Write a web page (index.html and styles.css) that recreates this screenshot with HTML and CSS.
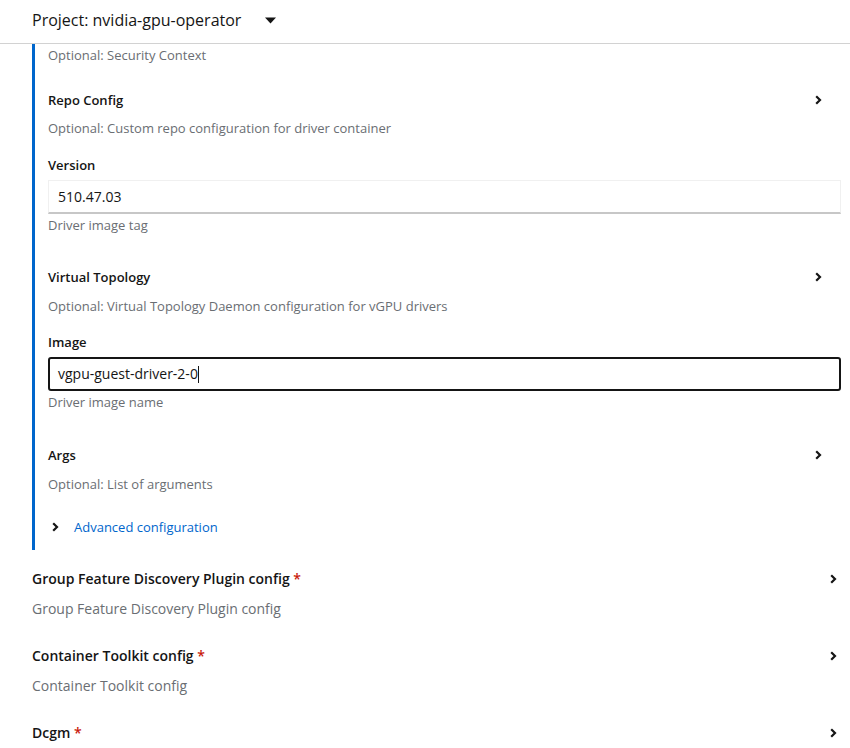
FILE: index.html
```html
<!DOCTYPE html>
<html>
<head>
<meta charset="utf-8">
<link rel="stylesheet" href="styles.css">
</head>
<body>
<header class="topbar">
  <span class="project">Project: nvidia-gpu-operator</span>
  <svg class="caret" width="11" height="7" viewBox="0 0 11 7"><path d="M0 0.5h11L5.5 6.5z" fill="#151515"/></svg>
</header>
<main class="content">
  <section class="panel">
    <p class="help first">Optional: Security Context</p>

    <div class="row inner-row r-repo">
      <span class="label">Repo Config</span>
      <svg class="chev" width="7" height="10" viewBox="0 0 7 10"><path d="M1.2 1.2L5 5 1.2 8.8" fill="none" stroke="#151515" stroke-width="2.2"/></svg>
    </div>
    <p class="help h-after-title">Optional: Custom repo configuration for driver container</p>

    <div class="label field-label">Version</div>
    <div class="input">510.47.03</div>
    <p class="help h-after-input">Driver image tag</p>

    <div class="row inner-row r-vt">
      <span class="label">Virtual Topology</span>
      <svg class="chev" width="7" height="10" viewBox="0 0 7 10"><path d="M1.2 1.2L5 5 1.2 8.8" fill="none" stroke="#151515" stroke-width="2.2"/></svg>
    </div>
    <p class="help h-after-title vt-help">Optional: Virtual Topology Daemon configuration for vGPU drivers</p>

    <div class="label field-label">Image</div>
    <div class="input focused">vgpu-guest-driver-2-0<span class="cursor"></span></div>
    <p class="help h-after-input">Driver image name</p>

    <div class="row inner-row r-args">
      <span class="label">Args</span>
      <svg class="chev" width="7" height="10" viewBox="0 0 7 10"><path d="M1.2 1.2L5 5 1.2 8.8" fill="none" stroke="#151515" stroke-width="2.2"/></svg>
    </div>
    <p class="help h-after-title args-help">Optional: List of arguments</p>

    <div class="advanced">
      <svg class="adv-chev" width="7" height="10" viewBox="0 0 7 10"><path d="M1.2 1.2L5 5 1.2 8.8" fill="none" stroke="#151515" stroke-width="2.2"/></svg>
      <span class="link">Advanced configuration</span>
    </div>
  </section>

  <div class="row outer-row o-first">
    <span class="olabel">Group Feature Discovery Plugin config <span class="req">*</span></span>
    <svg class="chev" width="7" height="10" viewBox="0 0 7 10"><path d="M1.2 1.2L5 5 1.2 8.8" fill="none" stroke="#151515" stroke-width="2.2"/></svg>
  </div>
  <p class="ohelp">Group Feature Discovery Plugin config</p>

  <div class="row outer-row">
    <span class="olabel">Container Toolkit config <span class="req">*</span></span>
    <svg class="chev" width="7" height="10" viewBox="0 0 7 10"><path d="M1.2 1.2L5 5 1.2 8.8" fill="none" stroke="#151515" stroke-width="2.2"/></svg>
  </div>
  <p class="ohelp">Container Toolkit config</p>

  <div class="row outer-row">
    <span class="olabel">Dcgm <span class="req">*</span></span>
    <svg class="chev" width="7" height="10" viewBox="0 0 7 10"><path d="M1.2 1.2L5 5 1.2 8.8" fill="none" stroke="#151515" stroke-width="2.2"/></svg>
  </div>
</main>
</body>
</html>
```

FILE: styles.css
```css
* { box-sizing: border-box; }
html, body {
  margin: 0;
  padding: 0;
  background: #fff;
  font-family: "Open Sans", "Noto Sans", sans-serif;
  color: #151515;
  overflow: hidden;
}
p { margin: 0; }

.topbar {
  height: 44px;
  border-bottom: 1px solid #d2d2d2;
  display: flex;
  align-items: center;
  padding-left: 32px;
  padding-bottom: 3px;
}
.project {
  font-size: 16px;
  line-height: 22px;
  color: #151515;
  width: 233px;
}
.caret { display: block; margin-top: 1px; }

.content {
  padding-left: 32px;
}
.panel {
  border-left: 3px solid #0066cc;
  padding-left: 13px;
  padding-right: 9px;
  padding-bottom: 13px;
}
.help {
  font-size: 13px;
  line-height: 20px;
  color: #6a6e73;
}
.help.first { padding-top: 1px; }
.label {
  font-size: 13px;
  line-height: 20px;
  font-weight: 600;
  color: #151515;
}
.row {
  display: flex;
  align-items: center;
  justify-content: space-between;
}
.inner-row { padding-right: 19px; }
.r-repo { margin-top: 25px; }
.r-vt { margin-top: 34px; }
.r-args { margin-top: 35px; }
.h-after-title { margin-top: 8px; }
.vt-help { margin-top: 9px; }
.args-help { margin-top: 9px; }
.field-label { margin-top: 17px; }
.vt-help + .field-label { margin-top: 16px; }
.input {
  margin-top: 5px;
  height: 34px;
  border: 1px solid #f0f0f0;
  border-bottom: 2px solid #c7c7c7;
  font-size: 14px;
  line-height: 31px;
  padding-left: 9px;
  color: #151515;
}
.input.focused {
  height: 34px;
  border: 2px solid #151515;
  border-radius: 3px;
  padding-left: 8px;
  line-height: 29px;
}
.cursor {
  display: inline-block;
  width: 1px;
  height: 17px;
  background: #151515;
  vertical-align: -4px;
}
.h-after-input {
  line-height: 16px;
  margin-top: 3px;
}
.advanced {
  margin-top: 23px;
  display: flex;
  align-items: center;
  height: 20px;
}
.adv-chev { margin-left: 4px; margin-right: 15px; }
.link {
  font-size: 13px;
  color: #0066cc;
  line-height: 20px;
}

.outer-row { padding-right: 13px; margin-top: 26px; }
.outer-row.o-first { margin-top: 18px; }
.olabel {
  font-size: 14px;
  line-height: 21px;
  font-weight: 600;
}
.req { color: #c9190b; }
.ohelp {
  margin-top: 9px;
  font-size: 14px;
  line-height: 21px;
  color: #6a6e73;
}
```
